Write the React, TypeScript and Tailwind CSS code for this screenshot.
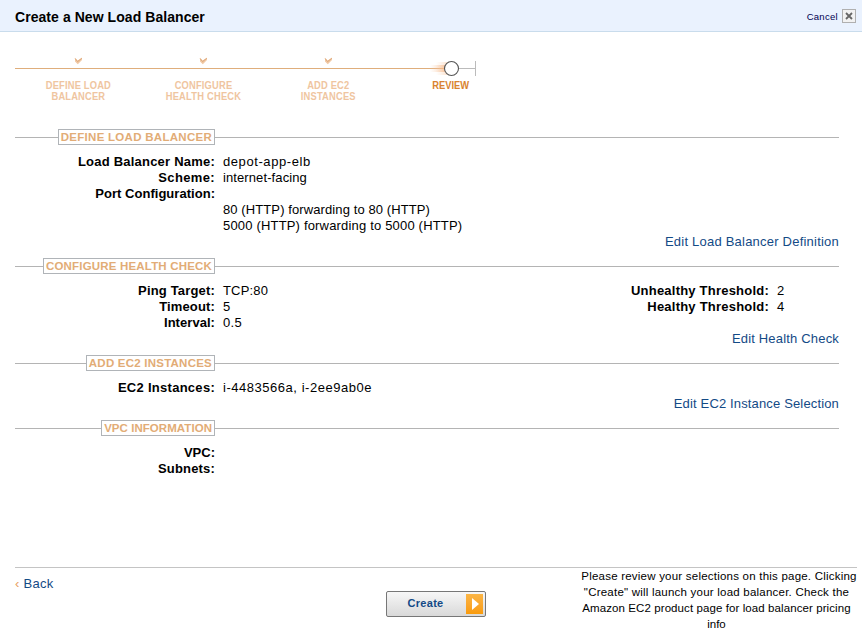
import type { ReactNode } from 'react';

function Check() {
  return (
    <svg width="9" height="8" viewBox="0 0 9 8" className="block">
      <path d="M1 0.8 L3.6 3.6 L8 0.8 V3 L3.8 7.2 L1 4.6 Z" fill="#f0c8a4" />
      <path d="M1.2 1.6 L3.6 4.6 L7.8 1.2" fill="none" stroke="#dda678" strokeWidth="1" />
    </svg>
  );
}

function Step({ lines, current }: { lines: { text: string; spacing: string }[]; current?: boolean }) {
  return (
    <div className="flex flex-col items-center">
      <div className="h-6 pt-px">{!current && <Check />}</div>
      <div className={`text-center text-[11px] leading-[11px] font-bold whitespace-nowrap ${current ? 'text-[#d98330]' : 'text-[#efc5a0]'}`}>
        {lines.map((l) => (
          <div key={l.text} className={`origin-center scale-x-85 ${l.spacing}`}>{l.text}</div>
        ))}
      </div>
    </div>
  );
}

function Section({ title, spacing, children, link }: { title: string; spacing: string; children: ReactNode; link?: ReactNode }) {
  return (
    <section className="mb-2">
      <div className="mb-[9px] flex h-4 items-center">
        <div className="flex w-[200px] items-center">
          <div className="h-px flex-1 bg-[#b4b4b4]" />
          <h2 className={`h-4 border border-[#b0b4b8] px-[2px] text-[11.5px] leading-[14px] font-bold whitespace-nowrap text-[#e2ac76] ${spacing}`}>{title}</h2>
        </div>
        <div className="h-px flex-1 bg-[#b4b4b4]" />
      </div>
      {children}
      {link && <div className="flex h-4 justify-end whitespace-nowrap text-[#134a86]">{link}</div>}
    </section>
  );
}

function Row({ label, value, ls = '', vs = '' }: { label?: string; value?: string; ls?: string; vs?: string }) {
  return (
    <div className="flex h-4 gap-2 whitespace-nowrap">
      <div className={`w-[200px] text-right font-bold ${ls}`}>{label}</div>
      <div className={vs}>{value}</div>
    </div>
  );
}

export default function App() {
  return (
    <div className='flex h-[632px] w-[862px] flex-col overflow-hidden bg-white font-["Liberation_Sans",sans-serif] text-[13px] leading-4 text-black'>
      <header className="flex h-8 shrink-0 items-center justify-between border-b border-[#c9dcec] bg-[#eaf2fe] pr-[6px] pl-[15px]">
        <h1 className="pt-[3px] text-[14px] font-bold tracking-[0.06px]">Create a New Load Balancer</h1>
        <div className="flex items-center gap-1">
          <span className="pt-[2px] text-[9.5px] tracking-[0.3px] text-[#000050]">Cancel</span>
          <span className="flex size-[14px] items-center justify-center border border-[#b0b0b0] bg-[#f2f2f2]">
            <svg width="8" height="8" viewBox="0 0 8 8"><path d="M1 1 L7 7 M7 1 L1 7" stroke="#666" strokeWidth="1.8" /></svg>
          </span>
        </div>
      </header>

      <nav className="relative mt-6 ml-[15px] h-[73px] w-[500px] shrink-0">
        <svg width="462" height="18" viewBox="0 0 462 18" className="absolute top-1 left-0">
          <defs>
            <linearGradient id="glow"><stop offset="0" stopColor="#f8c49a" stopOpacity="0" /><stop offset="1" stopColor="#f5b382" stopOpacity="0.75" /></linearGradient>
          </defs>
          <rect x="0" y="8" width="430" height="1" fill="#dfae7c" />
          <rect x="415" y="5" width="17" height="7" fill="url(#glow)" />
          <rect x="421" y="2" width="13" height="13" fill="url(#glow)" opacity="0.6" />
          <rect x="444" y="8" width="16" height="1" fill="#bbb" />
          <rect x="460" y="1" width="1" height="15" fill="#bbb" />
          <circle cx="436.5" cy="8.5" r="7" fill="#fff" stroke="#555" strokeWidth="1.1" />
        </svg>
        <div className="relative left-px grid grid-cols-[125px_125px_125px_120px]">
          <Step lines={[{ text: 'DEFINE LOAD', spacing: 'tracking-[0.2px]' }, { text: 'BALANCER', spacing: 'tracking-[0.2px]' }]} />
          <Step lines={[{ text: 'CONFIGURE', spacing: 'tracking-[0.2px]' }, { text: 'HEALTH CHECK', spacing: 'tracking-[0.25px]' }]} />
          <Step lines={[{ text: 'ADD EC2', spacing: 'tracking-[0.2px]' }, { text: 'INSTANCES', spacing: 'tracking-[0.2px]' }]} />
          <Step lines={[{ text: 'REVIEW', spacing: '' }]} current />
        </div>
      </nav>

      <main className="ml-[15px] w-[824px] flex-1">
        <Section title="DEFINE LOAD BALANCER" spacing="tracking-[0.28px]" link={<a className="tracking-[0.22px]">Edit Load Balancer Definition</a>}>
          <Row label="Load Balancer Name:" ls="tracking-[0.22px]" value="depot-app-elb" vs="tracking-[0.58px]" />
          <Row label="Scheme:" ls="tracking-[0.36px]" value="internet-facing" vs="tracking-[0.1px]" />
          <Row label="Port Configuration:" ls="tracking-[0.03px]" />
          <Row value="80 (HTTP) forwarding to 80 (HTTP)" vs="tracking-[0.1px]" />
          <Row value="5000 (HTTP) forwarding to 5000 (HTTP)" vs="tracking-[0.18px]" />
        </Section>
        <Section title="CONFIGURE HEALTH CHECK" spacing="tracking-[0.18px]" link={<a className="tracking-[0.18px]">Edit Health Check</a>}>
          <div className="flex">
            <div className="w-[554px]">
              <Row label="Ping Target:" ls="tracking-[0.17px]" value="TCP:80" vs="tracking-[0.17px]" />
              <Row label="Timeout:" ls="tracking-[0.15px]" value="5" />
              <Row label="Interval:" ls="tracking-[0.05px]" value="0.5" vs="tracking-[0.3px]" />
            </div>
            <div>
              <Row label="Unhealthy Threshold:" ls="tracking-[0.22px]" value="2" />
              <Row label="Healthy Threshold:" ls="tracking-[0.22px]" value="4" />
            </div>
          </div>
        </Section>
        <Section title="ADD EC2 INSTANCES" spacing="tracking-[0.23px]" link={<a className="tracking-[0.15px]">Edit EC2 Instance Selection</a>}>
          <Row label="EC2 Instances:" ls="tracking-[0.28px]" value="i-4483566a, i-2ee9ab0e" vs="tracking-[0.53px]" />
        </Section>
        <Section title="VPC INFORMATION" spacing="tracking-[0.05px]">
          <Row label="VPC:" />
          <Row label="Subnets:" ls="tracking-[0.18px]" />
        </Section>
      </main>

      <footer className="mr-[5px] ml-[15px] flex h-[65px] shrink-0 border-t border-[#c4c4c4]">
        <div className="w-[371px] pt-2 tracking-[0.3px] text-[#134a86]"><span className="text-[#e8a060]">‹</span> Back</div>
        <button className="mt-[23px] flex h-[26px] w-[100px] items-center rounded-[2px] border border-[#777] bg-linear-to-b from-[#f7f7f7] to-[#d9d9d9] pr-[2px] pb-[2px] text-[11px] font-bold tracking-[0.3px] text-[#134a86]">
          <span className="flex-1 pr-[2px] text-center">Create</span>
          <span className="mt-[2px] flex h-5 w-[17px] items-center justify-center bg-linear-to-b from-[#fbb544] to-[#f99b08]">
            <svg width="8" height="12" viewBox="0 0 8 12"><path d="M1 0 L8 6 L1 12 Z" fill="#fff" /></svg>
          </span>
        </button>
        <p className="ml-auto w-[281px] text-center text-[11.5px] whitespace-nowrap">
          <span className="block pl-[5px] tracking-[0.22px]">Please review your selections on this page. Clicking</span>
          <span className="block tracking-[0.22px]">"Create" will launch your load balancer. Check the</span>
          <span className="block tracking-[0.09px]">Amazon EC2 product page for load balancer pricing</span>
          <span className="block">info</span>
        </p>
      </footer>
    </div>
  );
}
